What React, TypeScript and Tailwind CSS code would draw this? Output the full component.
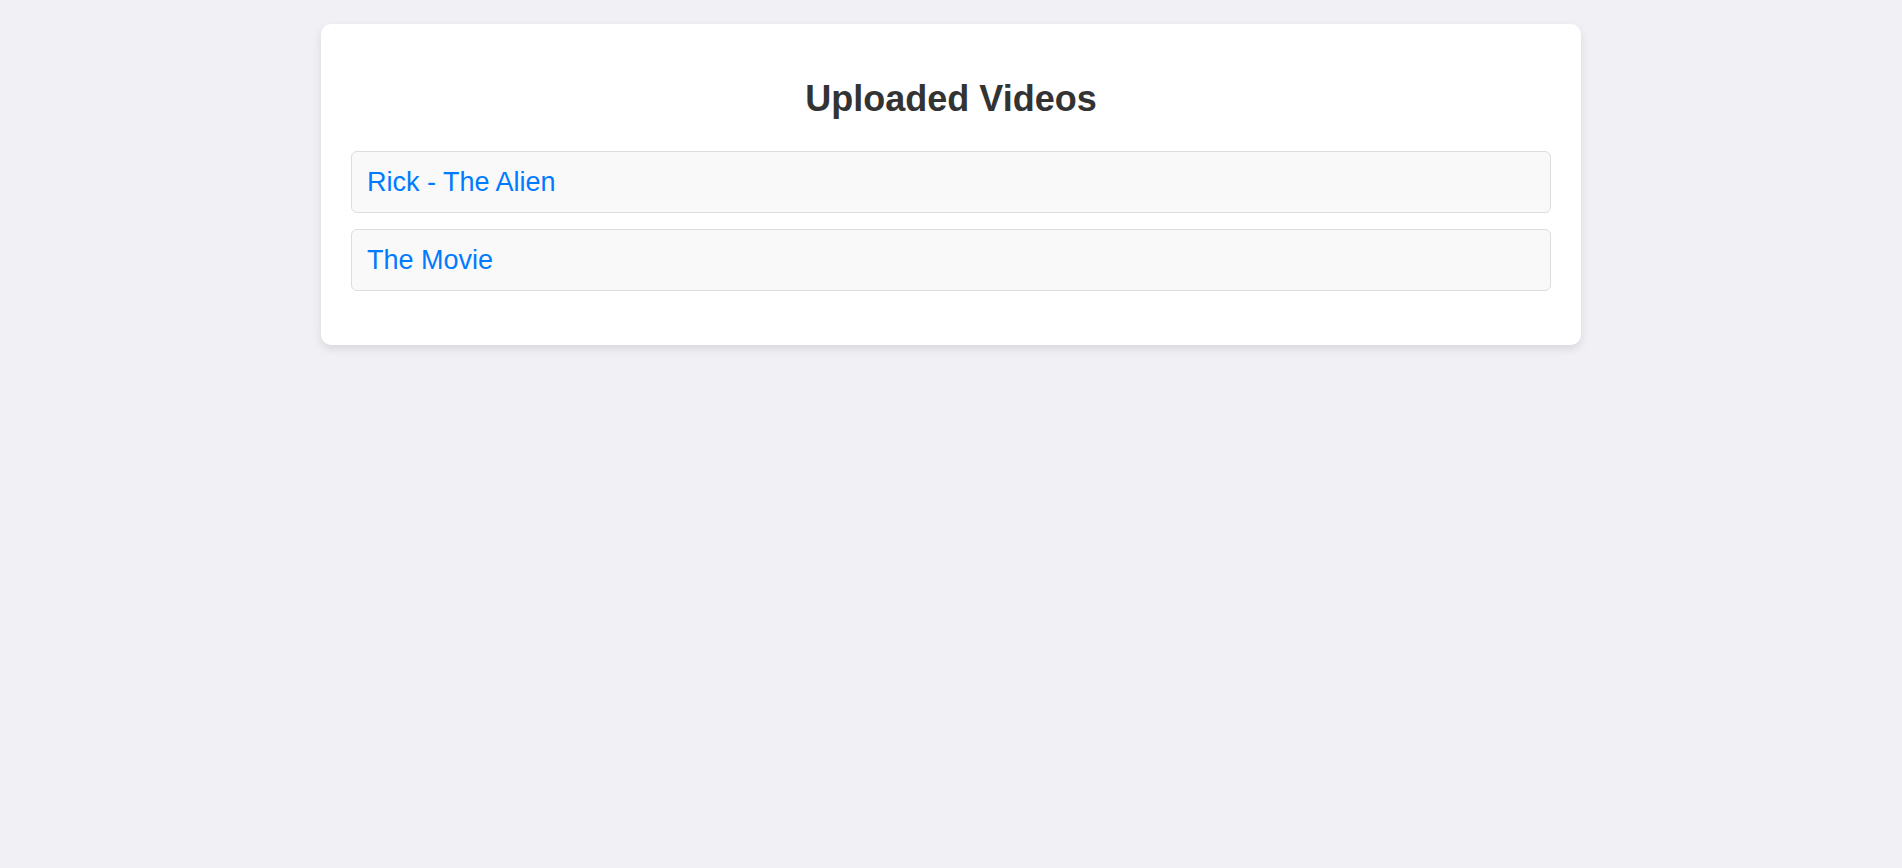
import React from 'react';

const videos = ['Rick - The Alien', 'The Movie'];

export default function App(): JSX.Element {
  return (
    <div className="min-h-screen bg-[#f0f0f5] pt-[24px] font-['Liberation_Sans',Arial,sans-serif]">
      <div className="mx-auto w-[1260px] rounded-[10px] bg-white px-[30px] pt-[30px] pb-[30px] shadow-[0_4px_10px_rgba(0,0,0,0.1)]">
        <h2 className="mt-[25px] mb-[32px] text-center text-[36px] font-bold leading-[40px] text-[#333]">
          Uploaded Videos
        </h2>

        {/* Video list */}
        <ul className="mb-[24px] flex flex-col gap-[16px]">
          {videos.map((title) => (
            <li
              key={title}
              className="rounded-[6px] border border-[#ddd] bg-[#f9f9f9] px-[15px] py-[15px] text-[27px] leading-[30px]"
            >
              <a href="#" className="text-[#007bff]">
                {title}
              </a>
            </li>
          ))}
        </ul>
      </div>
    </div>
  );
}
